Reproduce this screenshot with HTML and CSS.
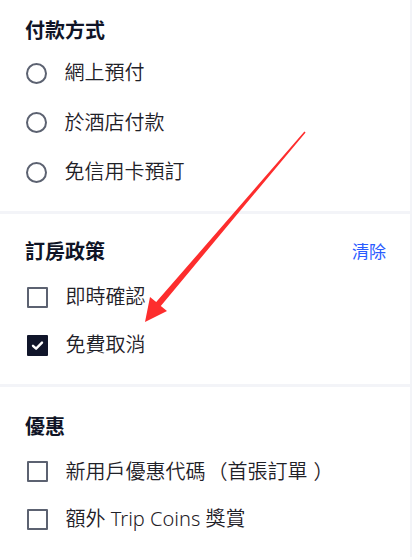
FILE: index.html
```html
<!DOCTYPE html>
<html lang="zh-Hant">
<head>
<meta charset="utf-8">
<link rel="stylesheet" href="styles.css">
</head>
<body>
<div class="page">
  <section class="group group-pay">
    <div class="head"><h2 class="title">付款方式</h2></div>
    <ul class="list radios">
      <li class="row"><span class="radio"></span><span class="label">網上預付</span></li>
      <li class="row"><span class="radio"></span><span class="label">於酒店付款</span></li>
      <li class="row"><span class="radio"></span><span class="label">免信用卡預訂</span></li>
    </ul>
  </section>
  <div class="sep"></div>
  <section class="group group-policy">
    <div class="head"><h2 class="title">訂房政策</h2><a class="clear">清除</a></div>
    <ul class="list checks">
      <li class="row"><span class="box"></span><span class="label">即時確認</span></li>
      <li class="row"><span class="box checked"><svg viewBox="0 0 21 21" width="21" height="21"><path d="M6 10.8 L9.1 13.7 L15 7.6" fill="none" stroke="#fff" stroke-width="2.4" stroke-linecap="round" stroke-linejoin="round"/></svg></span><span class="label">免費取消</span></li>
    </ul>
  </section>
  <div class="sep"></div>
  <section class="group group-offer">
    <div class="head"><h2 class="title">優惠</h2></div>
    <ul class="list checks">
      <li class="row"><span class="box"></span><span class="label">新用戶優惠代碼<span class="paren" lang="zh-Hans">（</span>首張訂單<span class="paren" lang="zh-Hans">）</span></span></li>
      <li class="row"><span class="box"></span><span class="label">額外 Trip Coins 獎賞</span></li>
    </ul>
  </section>
  <svg class="arrow" width="412" height="557" viewBox="0 0 412 557">
    <polygon points="305.6,132.4 304.4,131.6 156.2,302.1 150,297 145,322 167,311 160.8,305.9" fill="#fd2d2d"/>
  </svg>
</div>
</body>
</html>
```

FILE: styles.css
```css
html, body {
  margin: 0;
  padding: 0;
  background: #ffffff;
}
body {
  font-family: "Noto Sans", "Noto Sans CJK TC", sans-serif;
  color: #1a1c22;
  text-spacing-trim: space-all;
}
.page {
  position: relative;
  width: 410px;
  height: 557px;
  border-right: 2px solid #f3f4f8;
  overflow: hidden;
}
.group {
  padding: 0 24px 0 25px;
}
.group-pay {
  padding-top: 16px;
  padding-bottom: 13.5px;
}
.group-policy {
  padding-top: 23px;
  padding-bottom: 14.5px;
}
.group-offer {
  padding-top: 25px;
}
.sep {
  height: 3px;
  background: #f3f4f8;
}
.head {
  display: flex;
  align-items: center;
  justify-content: space-between;
  height: 28px;
}
.title {
  margin: 0;
  font-family: "Noto Sans CJK TC", sans-serif;
  font-size: 20px;
  font-weight: 700;
  line-height: 28px;
  color: #0f1426;
}
.clear {
  font-family: "Noto Sans CJK TC", sans-serif;
  font-size: 17px;
  line-height: 28px;
  color: #2a5cff;
  margin-right: 0;
}
.list {
  list-style: none;
  margin: 0;
  padding: 0;
}
.radios {
  margin-top: 4.5px;
}
.checks {
  margin-top: 8.5px;
}
.group-offer .checks {
  margin-top: 7.5px;
}
.row {
  display: flex;
  align-items: center;
  height: 48px;
}
.radios .row {
  height: 49.5px;
}
.label {
  font-size: 20px;
  font-weight: 350;
  line-height: 28px;
  color: #1f2128;
  margin-left: 18px;
}
.paren {
  display: inline-block;
  width: 1.1em;
  font-family: "Noto Sans CJK SC", sans-serif;
}
.paren:first-child,
.label .paren:nth-of-type(1) {
  text-align: right;
}
.label .paren:nth-of-type(2) {
  text-align: left;
  padding-left: 0.3em;
}
.radio {
  box-sizing: border-box;
  width: 21px;
  height: 21px;
  margin-left: 0.5px;
  border: 2.3px solid #5c6271;
  border-radius: 50%;
  flex: none;
}
.box {
  box-sizing: border-box;
  width: 21px;
  height: 21px;
  margin-left: 1.5px;
  border: 2.2px solid #5c6271;
  border-radius: 1px;
  flex: none;
}
.box.checked {
  border: none;
  background: #10152a;
}
.box svg {
  display: block;
}
.arrow {
  position: absolute;
  left: 0;
  top: 0;
  pointer-events: none;
}
```
